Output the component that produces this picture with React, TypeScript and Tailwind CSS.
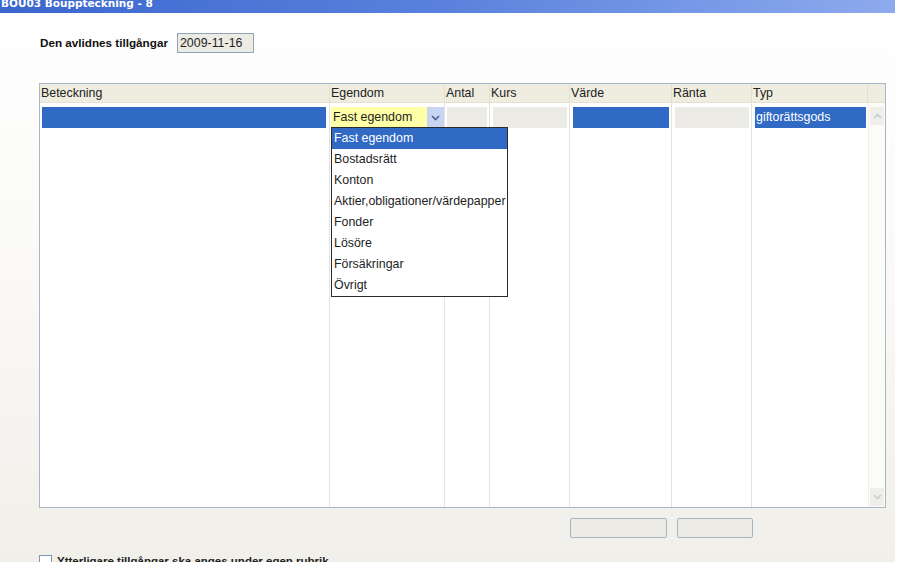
import React from "react";

const options = [
  "Fast egendom",
  "Bostadsrätt",
  "Konton",
  "Aktier,obligationer/värdepapper",
  "Fonder",
  "Lösöre",
  "Försäkringar",
  "Övrigt",
];

function Chevron({ up = false, className = "" }: { up?: boolean; className?: string }) {
  return (
    <svg width="9" height="6" viewBox="0 0 9 6" className={className}>
      <path
        d={up ? "M1 5 L4.5 1.5 L8 5" : "M1 1 L4.5 4.5 L8 1"}
        fill="none"
        stroke="currentColor"
        strokeWidth="1.6"
      />
    </svg>
  );
}

export default function App() {
  return (
    <div
      className="w-[897px] h-[562px] overflow-hidden bg-white text-[12.4px] text-[#1e1e1e] flex"
      style={{ fontFamily: '"Liberation Sans", Arial, sans-serif' }}
    >
      <div className="w-[895px] h-full flex flex-col bg-gradient-to-b from-white via-[#faf9f7] to-[#f1efe9]">
        {/* Title bar */}
        <div className="h-[13px] shrink-0 overflow-hidden bg-gradient-to-r from-[#3b66cf] via-[#5a82dc] to-[#8eaaee]">
          <div
            className="mt-[-4px] pl-[1px] text-[10.5px] font-bold text-white leading-[14px]"
            style={{ fontFamily: '"DejaVu Sans", Verdana, sans-serif' }}
          >
            BOU03 Bouppteckning - 8
          </div>
        </div>

        <div className="pl-[39px] flex flex-col">
          {/* Date row */}
          <div className="mt-[20px] flex items-center h-[20px]">
            <span className="pl-[1px] font-bold text-[11.7px] text-[#111]">Den avlidnes tillgångar</span>
            <div className="ml-[9px] w-[77px] h-[20px] border border-[#8fa3bd] bg-[#ecebe4] flex items-center pl-[2px]">
              2009-11-16
            </div>
          </div>

          {/* Table */}
          <div className="relative mt-[30px] w-[847px] h-[425px] border border-[#a7b6cb] bg-white flex flex-col">
            <div className="h-[19px] shrink-0 flex bg-[#efeddf] border-b border-[#e4e1d2]">
              <HeaderCell w="w-[290px]">Beteckning</HeaderCell>
              <HeaderCell w="w-[115px]">Egendom</HeaderCell>
              <HeaderCell w="w-[45px]">Antal</HeaderCell>
              <HeaderCell w="w-[80px]">Kurs</HeaderCell>
              <HeaderCell w="w-[102px]">Värde</HeaderCell>
              <HeaderCell w="w-[80px]">Ränta</HeaderCell>
              <HeaderCell w="w-[116px]">Typ</HeaderCell>
              <div className="flex-1" />
            </div>

            <div className="flex-1 flex">
              <Column w="w-[290px]">
                <div className="h-[21px] ml-[2px] mr-[3px] bg-[#316ac5]" />
              </Column>
              <Column w="w-[115px]">
                <div className="relative h-[21px] ml-[1px] flex">
                  <div className="flex-1 bg-[#ffffa8] flex items-center pl-[2px]">Fast egendom</div>
                  <div className="w-[17px] bg-[#c7d5f2] flex items-center justify-center text-[#4a5f8e]">
                    <Chevron />
                  </div>
                  <ul className="absolute left-0 top-[20px] z-10 w-[177px] border border-[#2b2b2b] bg-white">
                    {options.map((o, i) => (
                      <li
                        key={o}
                        className={`h-[21px] flex items-center pl-[2px] whitespace-nowrap ${
                          i === 0 ? "bg-[#316ac5] text-white" : ""
                        }`}
                      >
                        {o}
                      </li>
                    ))}
                  </ul>
                </div>
              </Column>
              <Column w="w-[45px]">
                <div className="h-[21px] mx-[2px] bg-[#ecebe5]" />
              </Column>
              <Column w="w-[80px]">
                <div className="h-[21px] ml-[3px] mr-[2px] bg-[#ecebe5]" />
              </Column>
              <Column w="w-[102px]">
                <div className="h-[21px] ml-[3px] mr-[2px] bg-[#316ac5]" />
              </Column>
              <Column w="w-[80px]">
                <div className="h-[21px] ml-[3px] mr-[2px] bg-[#ecebe5]" />
              </Column>
              <Column w="w-[116px]" last>
                <div className="h-[21px] ml-[3px] mr-[2px] bg-[#316ac5] text-white flex items-center pl-[1px]">
                  giftorättsgods
                </div>
              </Column>
              {/* Scrollbar */}
              <div className="flex-1 flex flex-col pt-[4px] pb-[1px] bg-[#fbfbf8] border-l border-[#f0efe8]">
                <div className="h-[18px] mx-[1px] bg-[#efeee8] flex items-center justify-center text-[#c9cfd8]">
                  <Chevron up />
                </div>
                <div className="flex-1" />
                <div className="h-[18px] mx-[1px] bg-[#efeee8] flex items-center justify-center text-[#c9cfd8]">
                  <Chevron />
                </div>
              </div>
            </div>
          </div>

          {/* Buttons */}
          <div className="mt-[10px] flex gap-[10px] pl-[531px]">
            <div className="w-[97px] h-[20px] border border-[#a5b3c6] rounded-[2px] bg-[#ecebe5]" />
            <div className="w-[76px] h-[20px] border border-[#a5b3c6] rounded-[2px] bg-[#ecebe5]" />
          </div>

          {/* Checkbox */}
          <div className="mt-[17px] flex items-start gap-[5px]">
            <div className="w-[13px] h-[13px] border border-[#8096b3] bg-white" />
            <span className="font-bold text-[11.5px] text-[#222] leading-[14px] mt-[-1px]">
              Ytterligare tillgångar ska anges under egen rubrik
            </span>
          </div>
        </div>
      </div>
    </div>
  );
}

function HeaderCell({ w, children }: { w: string; children: React.ReactNode }) {
  return (
    <div className={`${w} shrink-0 border-r border-[#e2dfcf] flex items-center pl-[1px] text-[#222]`}>
      {children}
    </div>
  );
}

function Column({ w, last = false, children }: { w: string; last?: boolean; children: React.ReactNode }) {
  return (
    <div className={`${w} shrink-0 pt-[4px] ${last ? "" : "border-r border-[#e3e3e3]"}`}>{children}</div>
  );
}
